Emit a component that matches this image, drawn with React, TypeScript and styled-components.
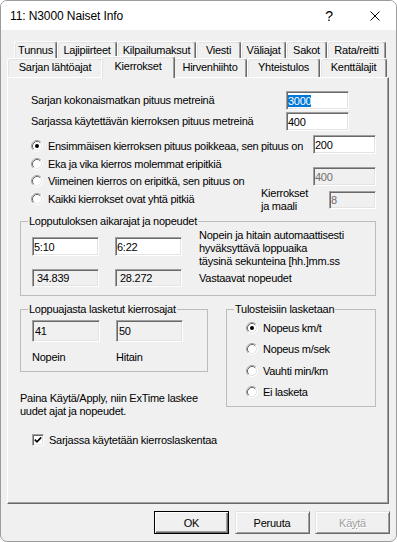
import React from 'react';
import styled, { createGlobalStyle } from 'styled-components';

const GlobalStyle = createGlobalStyle`
  html, body {
    margin: 0;
    padding: 0;
    background: #ffffff;
  }
  body {
    font-family: "Liberation Sans", Arial, sans-serif;
  }
`;

const Window = styled.div`
  width: 397px;
  height: 542px;
  box-sizing: border-box;
  border: 1px solid #9c9c9c;
  border-radius: 7px;
  background: #f0f0f0;
  overflow: hidden;
  display: flex;
  flex-direction: column;
  font-size: 11px;
  letter-spacing: -0.25px;
  color: #000;
`;

const TitleBar = styled.div`
  height: 29px;
  flex: none;
  background: #ffffff;
  display: flex;
  align-items: center;
  padding-left: 9px;
  font-size: 12px;
  letter-spacing: -0.1px;
`;

const TitleText = styled.span`
  flex: 1;
`;

const CaptionButton = styled.div<{ $w: number; $mr?: number }>`
  width: ${p => p.$w}px;
  margin-right: ${p => p.$mr ?? 0}px;
  height: 29px;
  display: flex;
  align-items: center;
  justify-content: center;
  font-size: 14px;
`;

const Tabs = styled.div`
  margin: 11px 0 0 6px;
  display: flex;
  flex-direction: column;
`;

const TabRow = styled.div<{ $h: number; $indent?: number }>`
  display: flex;
  height: ${p => p.$h}px;
  margin-left: ${p => p.$indent ?? 0}px;
  align-items: flex-start;
`;

const Tab = styled.div<{ $w: number; $selected?: boolean; $pt: number }>`
  box-sizing: border-box;
  width: ${p => p.$w + (p.$selected ? 4 : 0)}px;
  height: ${p => (p.$selected ? 'calc(100% + 3px)' : '100%')};
  margin: ${p => (p.$selected ? '-2px -2px 0' : '0')};
  padding-top: ${p => p.$pt}px;
  text-align: center;
  line-height: 13px;
  white-space: nowrap;
  background: #f0f0f0;
  border-top: 1px solid #ffffff;
  border-left: 1px solid #ffffff;
  border-right: 1px solid #696969;
  box-shadow: inset -1px 0 #a0a0a0, inset 1px 1px #e3e3e3;
  border-radius: 3px 3px 0 0;
  position: ${p => (p.$selected ? 'relative' : 'static')};
  z-index: ${p => (p.$selected ? 2 : 0)};
`;

const Panel = styled.div`
  box-sizing: border-box;
  width: 382px;
  height: 427px;
  border-top: 1px solid #ffffff;
  border-left: 1px solid #ffffff;
  border-right: 1px solid #696969;
  border-bottom: 1px solid #696969;
  box-shadow: inset -1px -1px #a0a0a0;
  padding: 0 12px;
  display: flex;
  flex-direction: column;
  position: relative;
  z-index: 1;
`;

const Row = styled.div<{ $mt: number; $h: number }>`
  display: flex;
  align-items: center;
  margin-top: ${p => p.$mt}px;
  height: ${p => p.$h}px;
`;

const Label = styled.span<{ $pl?: number }>`
  padding-left: ${p => p.$pl ?? 0}px;
  line-height: 13px;
  white-space: nowrap;
`;

const TextBox = styled.div<{ $w: number; $h?: number; $mode?: 'edit' | 'readonly' | 'disabled'; $ml?: string; $mr?: number; $pl?: number }>`
  box-sizing: border-box;
  flex: none;
  width: ${p => p.$w}px;
  height: ${p => p.$h ?? 19}px;
  margin-left: ${p => p.$ml ?? '0'};
  margin-right: ${p => p.$mr ?? 0}px;
  padding-left: ${p => p.$pl ?? 1}px;
  display: flex;
  align-items: center;
  background: ${p => (p.$mode && p.$mode !== 'edit' ? '#f0f0f0' : '#ffffff')};
  color: ${p => (p.$mode === 'disabled' ? '#6d6d6d' : '#000000')};
  border: 1px solid;
  border-color: #a0a0a0 #ffffff #ffffff #a0a0a0;
  box-shadow: inset 1px 1px #696969, inset -1px -1px #e3e3e3;
  font-size: 11px;
  white-space: nowrap;
`;

const Selected = styled.span`
  background: #0078d7;
  color: #ffffff;
`;

const Options = styled.div`
  display: flex;
  margin-top: 4px;
`;

const RadioList = styled.div<{ $pt: number; $pl: number; $pb?: number; $fill?: boolean }>`
  display: flex;
  flex-direction: column;
  padding: ${p => p.$pt}px 0 ${p => p.$pb ?? 0}px ${p => p.$pl}px;
  flex: ${p => (p.$fill ? '1 1 0' : 'none')};
  min-width: 0;
  letter-spacing: -0.3px;
`;

const RadioRow = styled.div<{ $h: number }>`
  display: flex;
  align-items: center;
  height: ${p => p.$h}px;
  white-space: nowrap;
`;

const RadioSvg = styled.svg`
  flex: none;
  margin-right: 5px;
`;

const SideInputs = styled.div`
  flex: none;
  width: 115px;
  display: flex;
  flex-direction: column;
  align-items: flex-end;
  gap: 13px;
`;

const MaaliRow = styled.div`
  width: 115px;
  display: flex;
  align-items: center;
  margin-top: -12px;
`;

const TwoLines = styled.div`
  line-height: 13px;
  white-space: nowrap;
  margin-right: auto;
`;

const Group = styled.fieldset<{ $w?: number; $mt: number; $ml?: number; $pl: number; $pb: number }>`
  margin: ${p => p.$mt}px 0 0 ${p => p.$ml ?? 0}px;
  padding: 0 0 ${p => p.$pb}px ${p => p.$pl}px;
  width: ${p => (p.$w ? `${p.$w}px` : 'auto')};
  box-sizing: border-box;
  border: 1px solid #bcbcbc;
  min-inline-size: 0;
`;

const Legend = styled.legend<{ $ml: number }>`
  padding: 0 1px;
  margin-left: ${p => p.$ml}px;
  line-height: 13px;
  font-size: 11px;
`;

const LimitsBody = styled.div`
  display: flex;
`;

const InputGrid = styled.div<{ $mt: number; $gap: number; $cols: string }>`
  display: grid;
  grid-template-columns: ${p => p.$cols};
  column-gap: 16px;
  row-gap: ${p => p.$gap}px;
  margin-top: ${p => p.$mt}px;
  align-content: start;
`;

const HelpText = styled.div`
  margin: 1px 0 0 17px;
  line-height: 13px;
  white-space: nowrap;
`;

const SpeedsLabel = styled.div`
  margin-top: 4px;
`;

const GroupsRow = styled.div`
  display: flex;
  align-items: flex-start;
`;

const LeftColumn = styled.div`
  display: flex;
  flex-direction: column;
`;

const Note = styled.div`
  margin-top: 20px;
  line-height: 13px;
`;

const CheckRow = styled.div`
  display: flex;
  align-items: center;
  height: 13px;
  margin-top: 15px;
  padding-left: 12px;
`;

const CheckBox = styled.div`
  box-sizing: border-box;
  width: 12px;
  height: 12px;
  margin-right: 5px;
  background: #fff;
  border: 1px solid;
  border-color: #a0a0a0 #ffffff #ffffff #a0a0a0;
  box-shadow: inset 1px 1px #696969, inset -1px -1px #e3e3e3;
  display: flex;
  align-items: center;
  justify-content: center;
`;

const ButtonBar = styled.div`
  display: flex;
  justify-content: flex-end;
  gap: 5.5px;
  margin-top: 7px;
  padding-right: 6px;
`;

const Button = styled.div<{ $default?: boolean; $disabled?: boolean }>`
  box-sizing: border-box;
  width: 75px;
  height: 23px;
  display: flex;
  align-items: center;
  justify-content: center;
  font-size: 11px;
  background: #f0f0f0;
  color: ${p => (p.$disabled ? '#a0a0a0' : '#000')};
  text-shadow: ${p => (p.$disabled ? '1px 1px #ffffff' : 'none')};
  border: 1px solid;
  border-color: ${p => (p.$default ? '#000' : '#e3e3e3 #696969 #696969 #e3e3e3')};
  box-shadow: ${p =>
    p.$default
      ? 'inset 1px 1px #ffffff, inset -1px -1px #696969, inset -2px -2px #a0a0a0'
      : 'inset 1px 1px #ffffff, inset -1px -1px #a0a0a0'};
`;

const Radio = ({ checked }: { checked?: boolean }) => (
  <RadioSvg width="12" height="12" viewBox="0 0 12 12">
    <circle cx="6" cy="6" r="5" fill="#ffffff" />
    <path d="M2.11 9.89 A5.5 5.5 0 0 1 9.89 2.11" fill="none" stroke="#a0a0a0" strokeWidth="1" />
    <path d="M9.89 2.11 A5.5 5.5 0 0 1 2.11 9.89" fill="none" stroke="#ffffff" strokeWidth="1" />
    <path d="M2.82 9.18 A4.5 4.5 0 0 1 9.18 2.82" fill="none" stroke="#696969" strokeWidth="1" />
    <path d="M9.18 2.82 A4.5 4.5 0 0 1 2.82 9.18" fill="none" stroke="#e3e3e3" strokeWidth="1" />
    {checked && <circle cx="6" cy="6" r="2" fill="#000000" />}
  </RadioSvg>
);

const topTabs = [
  ['Tunnus', 43],
  ['Lajipiirteet', 60],
  ['Kilpailumaksut', 79],
  ['Viesti', 45],
  ['Väliajat', 45],
  ['Sakot', 41],
  ['Rata/reitti', 59],
] as const;

const bottomTabs = [
  ['Sarjan lähtöajat', 96],
  ['Kierrokset', 70],
  ['Hirvenhiihto', 74],
  ['Yhteistulos', 73],
  ['Kenttälajit', 67],
] as const;

const lapOptions = [
  'Ensimmäisen kierroksen pituus poikkeaa, sen pituus on',
  'Eka ja vika kierros molemmat eripitkiä',
  'Viimeinen kierros on eripitkä, sen pituus on',
  'Kaikki kierrokset ovat yhtä pitkiä',
];

const outputOptions = ['Nopeus km/t', 'Nopeus m/sek', 'Vauhti min/km', 'Ei lasketa'];

export default function App() {
  return (
    <>
      <GlobalStyle />
      <Window>
        <TitleBar>
          <TitleText>11: N3000 Naiset Info</TitleText>
          <CaptionButton $w={30} $mr={10}>?</CaptionButton>
          <CaptionButton $w={42}>
            <svg width="10" height="10" viewBox="0 0 10 10">
              <path d="M0.5 0.5 L9.5 9.5 M9.5 0.5 L0.5 9.5" stroke="#000" strokeWidth="1" />
            </svg>
          </CaptionButton>
        </TitleBar>

        <Tabs>
          <TabRow $h={17} $indent={7}>
            {topTabs.map(([name, w]) => (
              <Tab key={name} $w={w} $pt={2}>
                {name}
              </Tab>
            ))}
          </TabRow>
          <TabRow $h={19}>
            {bottomTabs.map(([name, w]) => (
              <Tab key={name} $w={w} $pt={name === 'Kierrokset' ? 2.5 : 2} $selected={name === 'Kierrokset'}>
                {name}
              </Tab>
            ))}
          </TabRow>

          <Panel>
            <Row $mt={13} $h={19}>
              <Label $pl={11}>Sarjan kokonaismatkan pituus metreinä</Label>
              <TextBox $w={63} $ml="auto" $mr={27}>
                <Selected>3000</Selected>
              </TextBox>
            </Row>
            <Row $mt={2} $h={19}>
              <Label $pl={11}>Sarjassa käytettävän kierroksen pituus metreinä</Label>
              <TextBox $w={63} $ml="auto" $mr={27}>400</TextBox>
            </Row>

            <Options>
              <RadioList $pt={2.2} $pl={11} $fill>
                {lapOptions.map((o, i) => (
                  <RadioRow key={o} $h={17.6}>
                    <Radio checked={i === 0} />
                    {o}
                  </RadioRow>
                ))}
              </RadioList>
              <SideInputs>
                <TextBox $w={63}>200</TextBox>
                <TextBox $w={63} $mode="disabled">400</TextBox>
                <MaaliRow>
                  <TwoLines>
                    Kierrokset
                    <br />
                    ja maali
                  </TwoLines>
                  <TextBox $w={47} $h={18} $mode="disabled">8</TextBox>
                </MaaliRow>
              </SideInputs>
            </Options>

            <Group $mt={2} $pl={11} $pb={8}>
              <Legend $ml={-4}>Lopputuloksen aikarajat ja nopeudet</Legend>
              <LimitsBody>
                <InputGrid $mt={9} $gap={13} $cols="67px 67px">
                  <TextBox $w={67}>5:10</TextBox>
                  <TextBox $w={67}>6:22</TextBox>
                  <TextBox $w={67} $h={18} $mode="readonly" $pl={4}>34.839</TextBox>
                  <TextBox $w={67} $h={18} $mode="readonly" $pl={4}>28.272</TextBox>
                </InputGrid>
                <HelpText>
                  Nopein ja hitain automaattisesti
                  <br />
                  hyväksyttävä loppuaika
                  <br />
                  täysinä sekunteina [hh.]mm.ss
                  <SpeedsLabel>Vastaavat nopeudet</SpeedsLabel>
                </HelpText>
              </LimitsBody>
            </Group>

            <GroupsRow>
              <LeftColumn>
                <Group $w={188} $mt={6.5} $pl={11} $pb={7.5}>
                  <Legend $ml={-4}>Loppuajasta lasketut kierrosajat</Legend>
                  <InputGrid $mt={4.5} $gap={8.5} $cols="68px 67px">
                    <TextBox $w={68} $h={22} $mode="readonly" $pl={2}>41</TextBox>
                    <TextBox $w={67} $h={22} $mode="readonly" $pl={2}>50</TextBox>
                    <Label>Nopein</Label>
                    <Label>Hitain</Label>
                  </InputGrid>
                </Group>
                <Note>
                  Paina Käytä/Apply, niin ExTime laskee
                  <br />
                  uudet ajat ja nopeudet.
                </Note>
              </LeftColumn>

              <Group $w={150} $mt={6.5} $ml={18} $pl={0} $pb={3.4}>
                <Legend $ml={7}>Tulosteisiin lasketaan</Legend>
                <RadioList $pt={1.8} $pl={19}>
                  {outputOptions.map((o, i) => (
                    <RadioRow key={o} $h={21.3}>
                      <Radio checked={i === 0} />
                      {o}
                    </RadioRow>
                  ))}
                </RadioList>
              </Group>
            </GroupsRow>

            <CheckRow>
              <CheckBox>
                <svg width="8" height="8" viewBox="0 0 8 8">
                  <path d="M0.8 3.6 L3 5.8 L7.2 1.4" fill="none" stroke="#000" strokeWidth="1.7" />
                </svg>
              </CheckBox>
              Sarjassa käytetään kierroslaskentaa
            </CheckRow>
          </Panel>
        </Tabs>

        <ButtonBar>
          <Button $default>OK</Button>
          <Button>Peruuta</Button>
          <Button $disabled>
            Kä<u>y</u>tä
          </Button>
        </ButtonBar>
      </Window>
    </>
  );
}
